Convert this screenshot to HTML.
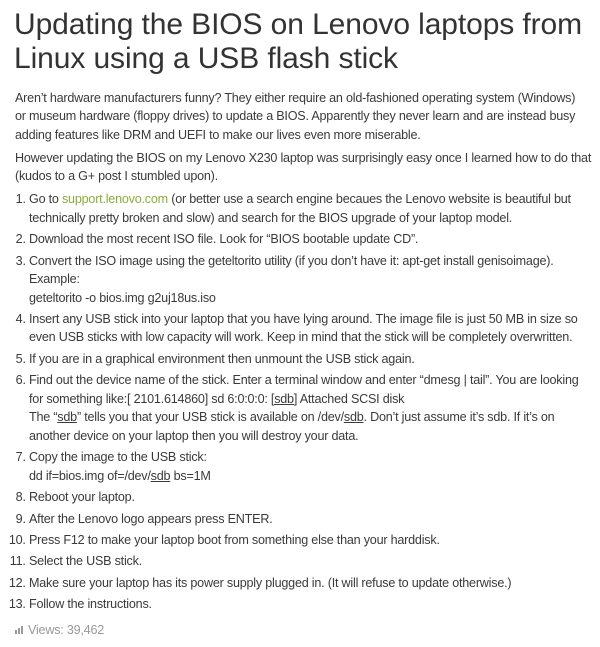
<!DOCTYPE html>
<html><head><meta charset="utf-8"><style>
body{margin:0;background:#fff;font-family:"Liberation Sans",sans-serif;color:#3a3a3a;width:600px;height:647px;overflow:hidden}
h1{font-weight:normal;font-size:30px;line-height:34px;margin:0;position:absolute;left:14px;top:8px;color:#333;white-space:nowrap;letter-spacing:-0.1px}
.c{position:absolute;left:15px;top:89px;font-size:12.6px;line-height:18.45px;white-space:nowrap;letter-spacing:-0.22px}
p{margin:0 0 4.5px}
ol{margin:0;padding-left:14px}
li{margin-bottom:3px;padding-left:0}
a{color:#8aac3a;text-decoration:none}
u{text-decoration:underline}
.v{color:#9a9a9a;margin-top:7px;font-size:12.6px}
.bars{display:inline-block;vertical-align:baseline;margin-right:4px}
.bars i{display:inline-block;width:2px;background:#9a9a9a;margin-right:1px}
</style></head><body>
<h1>Updating the BIOS on Lenovo laptops from<br>Linux using a USB flash stick</h1>
<div class="c">
<p>Aren’t hardware manufacturers funny? They either require an old-fashioned operating system (Windows)<br>or museum hardware (floppy drives) to update a BIOS. Apparently they never learn and are instead busy<br>adding features like DRM and UEFI to make our lives even more miserable.</p>
<p>However updating the BIOS on my Lenovo X230 laptop was surprisingly easy once I learned how to do that<br>(kudos to a G+ post I stumbled upon).</p>
<ol>
<li>Go to <a>support.lenovo.com</a> (or better use a search engine becaues the Lenovo website is beautiful but<br>technically pretty broken and slow) and search for the BIOS upgrade of your laptop model.</li>
<li>Download the most recent ISO file. Look for “BIOS bootable update CD”.</li>
<li>Convert the ISO image using the geteltorito utility (if you don’t have it: apt-get install genisoimage).<br>Example:<br>geteltorito -o bios.img g2uj18us.iso</li>
<li>Insert any USB stick into your laptop that you have lying around. The image file is just 50 MB in size so<br>even USB sticks with low capacity will work. Keep in mind that the stick will be completely overwritten.</li>
<li>If you are in a graphical environment then unmount the USB stick again.</li>
<li>Find out the device name of the stick. Enter a terminal window and enter “dmesg | tail”. You are looking<br>for something like:[ 2101.614860] sd 6:0:0:0: <u>[sdb]</u> Attached SCSI disk<br>The “<u>sdb</u>” tells you that your USB stick is available on /dev/<u>sdb</u>. Don’t just assume it’s sdb. If it’s on<br>another device on your laptop then you will destroy your data.</li>
<li>Copy the image to the USB stick:<br>dd if=bios.img of=/dev/<u>sdb</u> bs=1M</li>
<li>Reboot your laptop.</li>
<li>After the Lenovo logo appears press ENTER.</li>
<li>Press F12 to make your laptop boot from something else than your harddisk.</li>
<li>Select the USB stick.</li>
<li>Make sure your laptop has its power supply plugged in. (It will refuse to update otherwise.)</li>
<li>Follow the instructions.</li>
</ol>
<div class="v"><span class="bars"><i style="height:4px"></i><i style="height:6px"></i><i style="height:8px"></i></span>Views: 39,462</div>
</div>
</body></html>
